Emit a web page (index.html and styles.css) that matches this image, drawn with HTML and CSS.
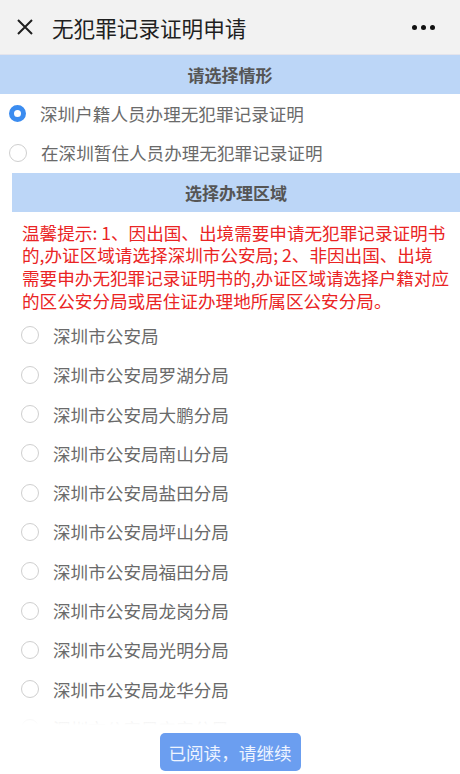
FILE: index.html
```html
<!DOCTYPE html>
<html lang="zh-CN">
<head>
  <meta charset="UTF-8" />
  <meta name="viewport" content="width=device-width, initial-scale=1.0"/>
  <title>无犯罪记录证明申请</title>
  <link rel="stylesheet" href="styles.css">
</head>
<body>
  <div class="topbar">
    <svg class="close-icon" width="18" height="18" viewBox="0 0 18 18">
      <path d="M2 2 L16 16 M16 2 L2 16" stroke="#1f1f1f" stroke-width="2" fill="none"/>
    </svg>
    <span class="topbar-title">无犯罪记录证明申请</span>
    <span class="dots"><i></i><i></i><i></i></span>
  </div>

  <div class="bar">请选择情形</div>
  <div class="option">
    <span class="radio checked"></span>
    <span>深圳户籍人员办理无犯罪记录证明</span>
  </div>
  <div class="option">
    <span class="radio"></span>
    <span>在深圳暂住人员办理无犯罪记录证明</span>
  </div>

  <div class="area">
    <div class="bar">选择办理区域</div>
    <p class="tip">温馨提示: 1、因出国、出境需要申请无犯罪记录证明书<br>的,办证区域请选择深圳市公安局; 2、非因出国、出境<br>需要申办无犯罪记录证明书的,办证区域请选择户籍对应<br>的区公安分局或居住证办理地所属区公安分局。</p>
    <div class="option"><span class="radio"></span><span>深圳市公安局</span></div>
    <div class="option"><span class="radio"></span><span>深圳市公安局罗湖分局</span></div>
    <div class="option"><span class="radio"></span><span>深圳市公安局大鹏分局</span></div>
    <div class="option"><span class="radio"></span><span>深圳市公安局南山分局</span></div>
    <div class="option"><span class="radio"></span><span>深圳市公安局盐田分局</span></div>
    <div class="option"><span class="radio"></span><span>深圳市公安局坪山分局</span></div>
    <div class="option"><span class="radio"></span><span>深圳市公安局福田分局</span></div>
    <div class="option"><span class="radio"></span><span>深圳市公安局龙岗分局</span></div>
    <div class="option"><span class="radio"></span><span>深圳市公安局光明分局</span></div>
    <div class="option"><span class="radio"></span><span>深圳市公安局龙华分局</span></div>
    <div class="option"><span class="radio"></span><span>深圳市公安局宝安分局</span></div>
  </div>

  <div class="footer">
    <button class="next-btn">已阅读，请继续</button>
  </div>
</body>
</html>
```

FILE: styles.css
```css
body {
  margin: 0;
  height: 774px;
  overflow: hidden;
  background: #fff;
  font-family: "Noto Sans CJK SC", "Noto Sans", sans-serif;
  color: #666;
  position: relative;
}

.topbar {
  height: 54px;
  display: flex;
  align-items: center;
  background: #f2f2f2;
  border-bottom: 1px solid #e4e4ec;
  padding: 0 25px 0 16px;
}

.close-icon {
  flex: none;
  margin-right: 18px;
}

.topbar-title {
  flex: 1;
  font-size: 21.6px;
  color: #1f1f1f;
}

.dots {
  display: flex;
  gap: 4px;
}

.dots i {
  width: 5px;
  height: 5px;
  border-radius: 50%;
  background: #111;
}

.bar {
  height: 39px;
  line-height: 39px;
  background: #bcd6f7;
  text-align: center;
  font-size: 17px;
  font-weight: bold;
  color: #555;
}

.option {
  height: 39.3px;
  display: flex;
  align-items: center;
  padding-left: 9px;
  font-size: 17.6px;
  color: #6a6a6a;
}

.radio {
  flex: none;
  width: 16px;
  height: 16px;
  border: 1px solid #cfcfcf;
  border-radius: 50%;
  margin-right: 14px;
  box-sizing: content-box;
}

.radio.checked {
  width: 7px;
  height: 7px;
  border: 5px solid #3b8cf0;
}

.area {
  margin-left: 12px;
}

.area .option {
  padding-left: 9px;
}

.tip {
  margin: 0;
  padding: 10px 0 3px 10px;
  white-space: nowrap;
  font-size: 17.6px;
  line-height: 22.8px;
  color: #ea2424;
}

.footer {
  position: absolute;
  left: 0;
  right: 0;
  bottom: 0;
  height: 49px;
  background: #fff;
  text-align: center;
}

.footer::before {
  content: "";
  position: absolute;
  left: 0;
  right: 0;
  top: -12px;
  height: 12px;
  background: linear-gradient(to bottom, rgba(255,255,255,0.7), #fff);
}

.next-btn {
  margin-top: 8px;
  width: 141px;
  height: 38px;
  border: none;
  border-radius: 5px;
  background: #6b9ef0;
  color: #eef4ff;
  font-family: inherit;
  font-size: 17.6px;
  padding: 0;
}
```
